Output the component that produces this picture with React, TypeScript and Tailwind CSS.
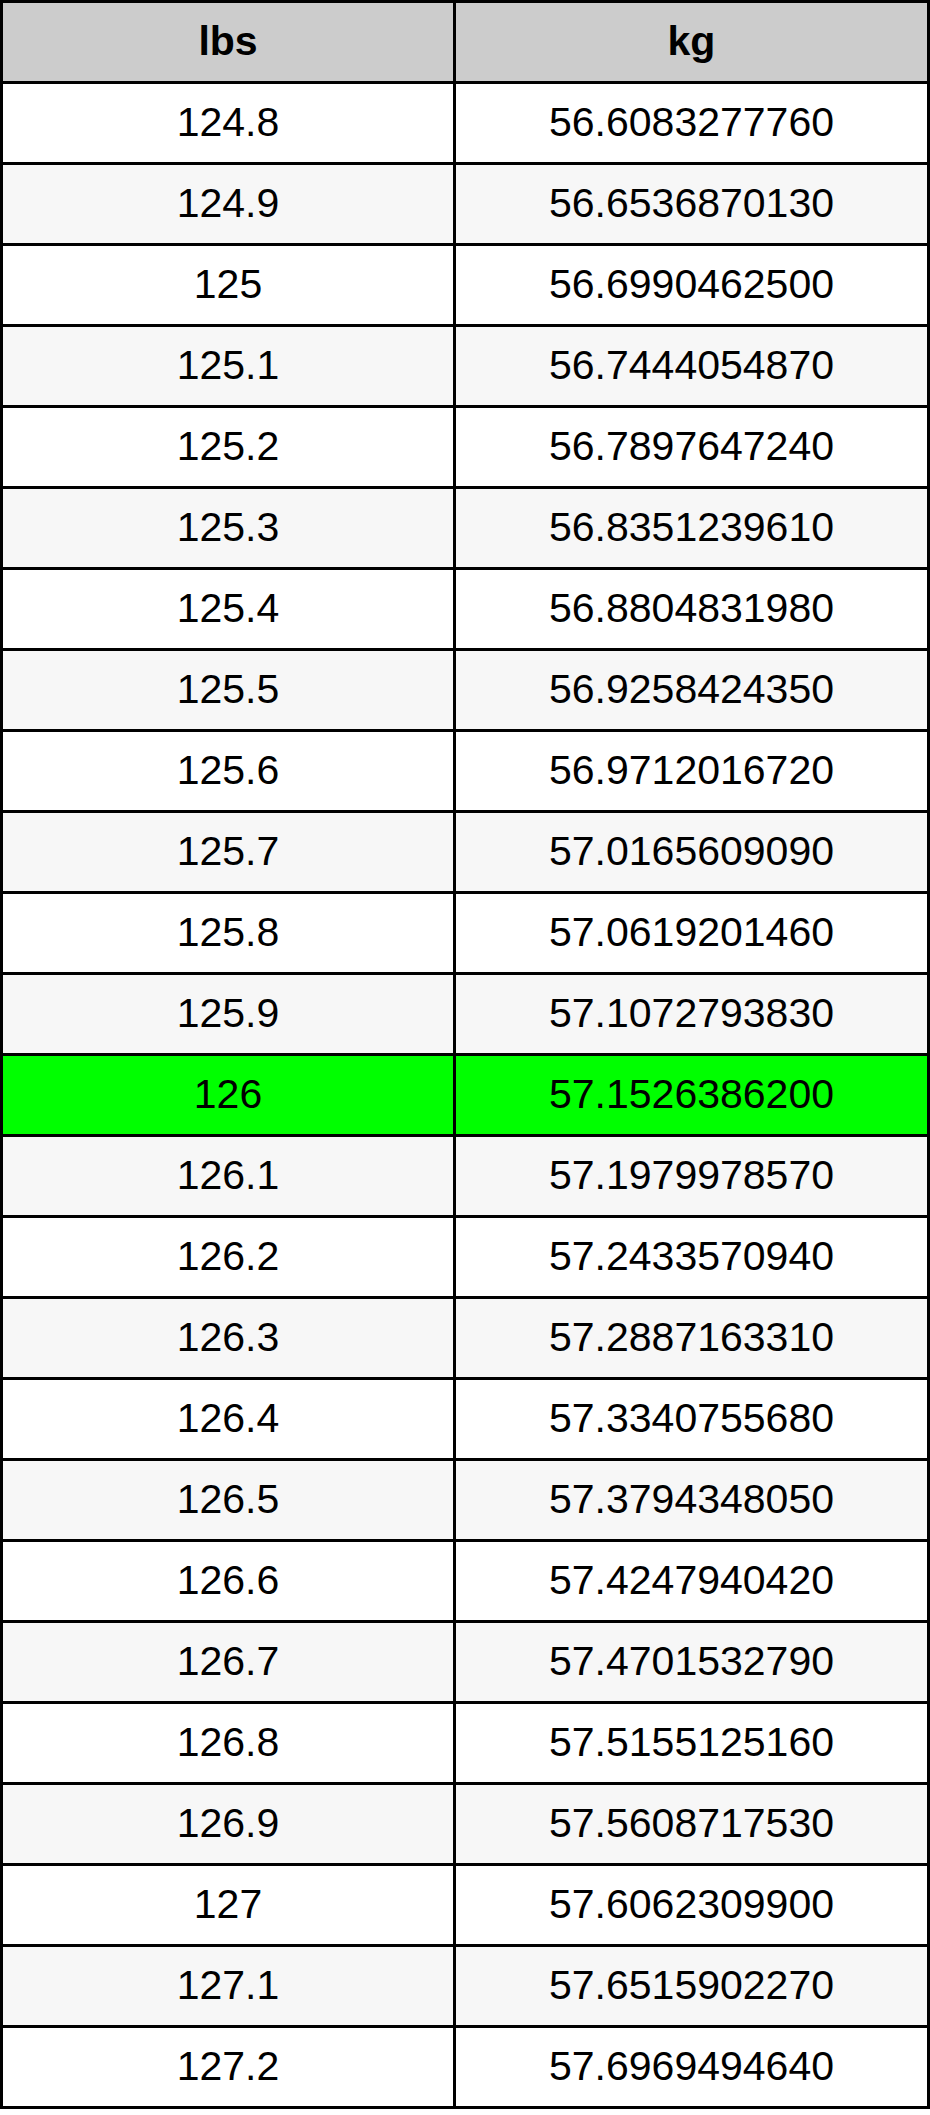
const rows: [string, string][] = [
  ["124.8", "56.6083277760"],
  ["124.9", "56.6536870130"],
  ["125", "56.6990462500"],
  ["125.1", "56.7444054870"],
  ["125.2", "56.7897647240"],
  ["125.3", "56.8351239610"],
  ["125.4", "56.8804831980"],
  ["125.5", "56.9258424350"],
  ["125.6", "56.9712016720"],
  ["125.7", "57.0165609090"],
  ["125.8", "57.0619201460"],
  ["125.9", "57.1072793830"],
  ["126", "57.1526386200"],
  ["126.1", "57.1979978570"],
  ["126.2", "57.2433570940"],
  ["126.3", "57.2887163310"],
  ["126.4", "57.3340755680"],
  ["126.5", "57.3794348050"],
  ["126.6", "57.4247940420"],
  ["126.7", "57.4701532790"],
  ["126.8", "57.5155125160"],
  ["126.9", "57.5608717530"],
  ["127", "57.6062309900"],
  ["127.1", "57.6515902270"],
  ["127.2", "57.6969494640"],
];

export default function App() {
  return (
    <div className="w-[930px] bg-white font-['Liberation_Sans',Arial,sans-serif] text-black">
      <table className="w-[930px] table-fixed border-collapse border-[3px] border-black text-[41px]">
        <colgroup>
          <col className="w-[453px]" />
          <col />
        </colgroup>
        <thead>
          <tr className="h-[81px] bg-[#cccccc]">
            <th className="border-[3px] border-black p-0 text-center font-bold">lbs</th>
            <th className="border-[3px] border-black p-0 text-center font-bold">kg</th>
          </tr>
        </thead>
        <tbody>
          {rows.map(([lbs, kg], i) => {
            // highlighted value, otherwise zebra striping
            const bg = lbs === "126" ? "bg-[#00ff00]" : i % 2 === 1 ? "bg-[#f7f7f7]" : "bg-white";
            return (
              <tr key={lbs} className={`h-[81px] ${bg}`}>
                <td className="border-[3px] border-black p-0 text-center">{lbs}</td>
                <td className="border-[3px] border-black p-0 text-center">{kg}</td>
              </tr>
            );
          })}
        </tbody>
      </table>
    </div>
  );
}
